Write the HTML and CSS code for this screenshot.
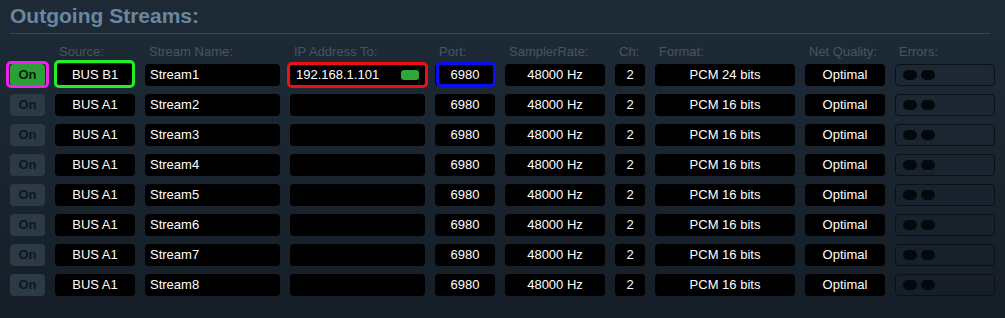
FILE: index.html
```html
<!DOCTYPE html>
<html>
<head>
<meta charset="utf-8">
<link rel="stylesheet" href="styles.css">
</head>
<body>
<div class="panel">
  <h1 class="title">Outgoing Streams:</h1>
  <div class="sep"></div>
  <div class="grid head">
    <div>&nbsp;</div>
    <div>Source:</div>
    <div>Stream Name:</div>
    <div>IP Address To:</div>
    <div>Port:</div>
    <div>SamplerRate:</div>
    <div>Ch:</div>
    <div>Format:</div>
    <div>Net Quality:</div>
    <div>Errors:</div>
  </div>
  <div class="grid rows">
    <div class="btn on hl hl-magenta">On</div>
    <div class="cell hl hl-green">BUS B1</div>
    <div class="cell left">Stream1</div>
    <div class="cell left ip hl hl-red">192.168.1.101<span class="led"></span></div>
    <div class="cell hl hl-blue">6980</div>
    <div class="cell">48000 Hz</div>
    <div class="cell">2</div>
    <div class="cell">PCM 24 bits</div>
    <div class="cell">Optimal</div>
    <div class="err"><span></span><span></span></div>

    <div class="btn">On</div>
    <div class="cell">BUS A1</div>
    <div class="cell left">Stream2</div>
    <div class="cell left ip"></div>
    <div class="cell">6980</div>
    <div class="cell">48000 Hz</div>
    <div class="cell">2</div>
    <div class="cell">PCM 16 bits</div>
    <div class="cell">Optimal</div>
    <div class="err"><span></span><span></span></div>

    <div class="btn">On</div>
    <div class="cell">BUS A1</div>
    <div class="cell left">Stream3</div>
    <div class="cell left ip"></div>
    <div class="cell">6980</div>
    <div class="cell">48000 Hz</div>
    <div class="cell">2</div>
    <div class="cell">PCM 16 bits</div>
    <div class="cell">Optimal</div>
    <div class="err"><span></span><span></span></div>

    <div class="btn">On</div>
    <div class="cell">BUS A1</div>
    <div class="cell left">Stream4</div>
    <div class="cell left ip"></div>
    <div class="cell">6980</div>
    <div class="cell">48000 Hz</div>
    <div class="cell">2</div>
    <div class="cell">PCM 16 bits</div>
    <div class="cell">Optimal</div>
    <div class="err"><span></span><span></span></div>

    <div class="btn">On</div>
    <div class="cell">BUS A1</div>
    <div class="cell left">Stream5</div>
    <div class="cell left ip"></div>
    <div class="cell">6980</div>
    <div class="cell">48000 Hz</div>
    <div class="cell">2</div>
    <div class="cell">PCM 16 bits</div>
    <div class="cell">Optimal</div>
    <div class="err"><span></span><span></span></div>

    <div class="btn">On</div>
    <div class="cell">BUS A1</div>
    <div class="cell left">Stream6</div>
    <div class="cell left ip"></div>
    <div class="cell">6980</div>
    <div class="cell">48000 Hz</div>
    <div class="cell">2</div>
    <div class="cell">PCM 16 bits</div>
    <div class="cell">Optimal</div>
    <div class="err"><span></span><span></span></div>

    <div class="btn">On</div>
    <div class="cell">BUS A1</div>
    <div class="cell left">Stream7</div>
    <div class="cell left ip"></div>
    <div class="cell">6980</div>
    <div class="cell">48000 Hz</div>
    <div class="cell">2</div>
    <div class="cell">PCM 16 bits</div>
    <div class="cell">Optimal</div>
    <div class="err"><span></span><span></span></div>

    <div class="btn">On</div>
    <div class="cell">BUS A1</div>
    <div class="cell left">Stream8</div>
    <div class="cell left ip"></div>
    <div class="cell">6980</div>
    <div class="cell">48000 Hz</div>
    <div class="cell">2</div>
    <div class="cell">PCM 16 bits</div>
    <div class="cell">Optimal</div>
    <div class="err"><span></span><span></span></div>
  </div>
</div>
</body>
</html>
```

FILE: styles.css
```css
html, body {
  margin: 0;
  padding: 0;
}
body {
  width: 1005px;
  height: 318px;
  overflow: hidden;
  background: linear-gradient(#1e2b37, #151e27);
  font-family: "Liberation Sans", Arial, sans-serif;
}
.panel {
  padding: 4px 0 0 10px;
}
.title {
  margin: 0;
  font-size: 21px;
  line-height: 24px;
  font-weight: bold;
  color: #6a86a0;
}
.sep {
  margin: 5px 15px 0 0;
  height: 1px;
  background: #3a4856;
}
.grid {
  display: grid;
  grid-template-columns: 35px 80px 135px 135px 60px 100px 30px 140px 80px 100px;
  column-gap: 10px;
}
.head {
  margin-top: 10px;
  margin-bottom: 5px;
  font-size: 13px;
  line-height: 15px;
  color: #465563;
}
.head div {
  padding-left: 4px;
  white-space: nowrap;
}
.rows {
  grid-auto-rows: 22px;
  row-gap: 8px;
}
.cell {
  position: relative;
  background: #000;
  border-radius: 4px;
  color: #fff;
  font-size: 13px;
  line-height: 22px;
  text-align: center;
  white-space: nowrap;
}
.cell.left {
  text-align: left;
  padding-left: 5px;
}
.cell.ip {
  padding-left: 6px;
}
.led {
  position: absolute;
  right: 6px;
  top: 6px;
  width: 18px;
  height: 10px;
  border-radius: 3px;
  background: #2ea83a;
}
.btn {
  position: relative;
  background: #2c3a47;
  border-radius: 4px;
  color: #0f171e;
  font-size: 13px;
  font-weight: bold;
  line-height: 22px;
  text-align: center;
}
.btn.on {
  background: #2c9f37;
  color: #0b1a0c;
}
.err {
  border: 1px solid #0a1016;
  border-radius: 4px;
  display: flex;
  align-items: center;
  gap: 4px;
  padding-left: 7px;
}
.err span {
  width: 14px;
  height: 10px;
  border-radius: 5px;
  background: #03080c;
}
.hl::after {
  content: "";
  position: absolute;
  top: -4px;
  bottom: -2px;
  left: -2px;
  right: -1px;
  border: 3px solid;
  border-radius: 5px;
  pointer-events: none;
}
.hl-magenta::after { border-color: #f020f0; left: -4px; right: -4px; top: -3px; bottom: -2px; }
.hl-green::after { border-color: #22f022; left: -1px; right: 0; }
.hl-red::after { border-color: #f01010; left: -3px; right: -3px; top: -2px; bottom: -2px; }
.hl-blue::after { border-color: #0a10f0; left: 1px; right: -1px; top: -2px; bottom: -1px; }
```
